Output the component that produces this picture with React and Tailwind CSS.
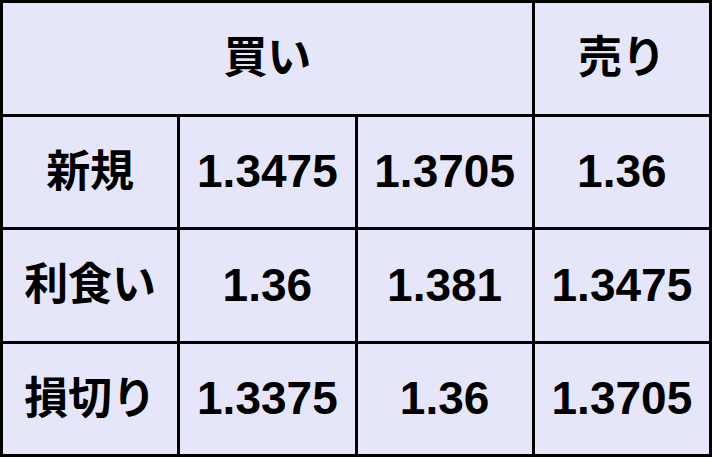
import React from 'react';

const rows = [
  { label: '新規', values: ['1.3475', '1.3705', '1.36'] },
  { label: '利食い', values: ['1.36', '1.381', '1.3475'] },
  { label: '損切り', values: ['1.3375', '1.36', '1.3705'] },
];

const App = () => {
  return (
    <div className="w-[712px] h-[457px] bg-black p-[3px] grid grid-cols-4 grid-rows-4 gap-[3px] text-black font-bold font-['Liberation_Sans','Noto_Sans_CJK_JP',sans-serif]">
      {/* ヘッダー */}
      <div className="col-span-3 bg-[#e6e6fa] flex items-center justify-center text-[44px]">買い</div>
      <div className="bg-[#e6e6fa] flex items-center justify-center text-[44px]">売り</div>

      {rows.map((row) => (
        <React.Fragment key={row.label}>
          <div className="bg-[#e6e6fa] flex items-center justify-center text-[44px]">{row.label}</div>
          {row.values.map((v, i) => (
            <div key={i} className="bg-[#e6e6fa] flex items-center justify-center text-[46px]">
              {v}
            </div>
          ))}
        </React.Fragment>
      ))}
    </div>
  );
};

export default App;
